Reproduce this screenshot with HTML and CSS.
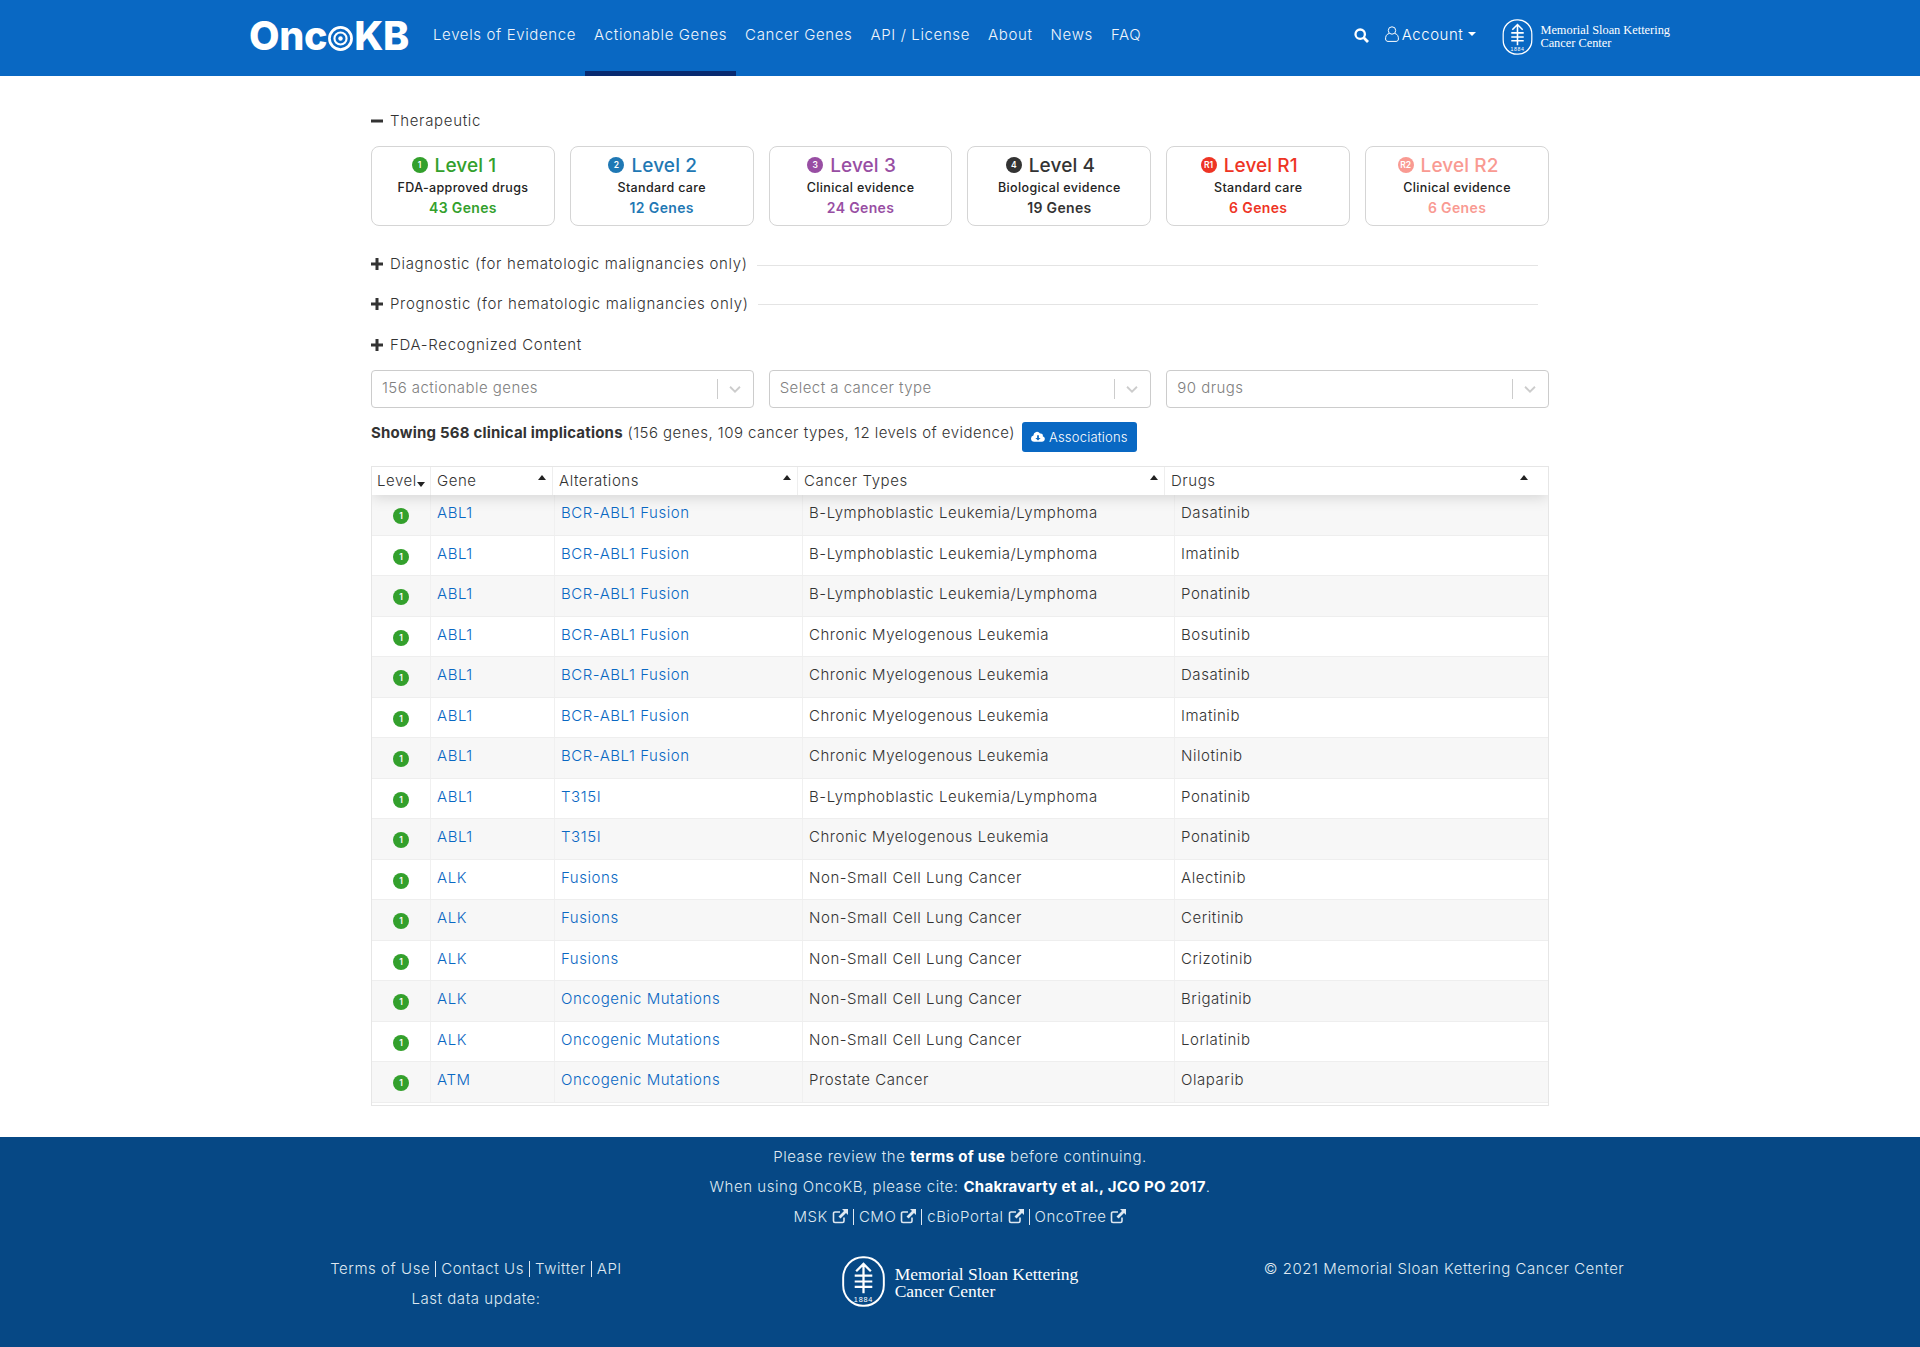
FILE: index.html
```html
<!DOCTYPE html>
<html lang="en">
<head>
    <meta charset="UTF-8">
    <title>OncoKB - Actionable Genes</title>
    <link rel="stylesheet" href="styles.css">
</head>
<body>
    <svg class="sprites" width="0" height="0">
        <symbol id="msk" viewBox="0 0 44 52">
            <rect x="1.2" y="1.2" width="41.6" height="49.6" rx="20" ry="21" fill="none" stroke="currentColor" stroke-width="2"/>
            <path d="M22 8V38M14.500 15.500L22 8L29.500 15.500M13 20H31M13 26H31M13 31.500H31" fill="none" stroke="currentColor" stroke-width="2.300"/>
        </symbol>
        <symbol id="ext" viewBox="0 0 16 16">
            <path d="M12 9.500V13a1.500 1.500 0 0 1-1.500 1.500H3A1.500 1.500 0 0 1 1.500 13V5.500A1.500 1.500 0 0 1 3 4h5" fill="none" stroke="currentColor" stroke-width="1.600"/>
            <path d="M10 1h6v6l-2-2-5.500 5.500-2-2L12 3z" fill="currentColor"/>
        </symbol>
        <symbol id="chev" viewBox="0 0 20 20">
            <path d="M4.500 7.500L10 13l5.500-5.500" fill="none" stroke="currentColor" stroke-width="2"/>
        </symbol>
        <symbol id="plus" viewBox="0 0 12 12">
            <path d="M4.500 0h3v4.500H12v3H7.500V12h-3V7.500H0v-3h4.500z" fill="currentColor"/>
        </symbol>
    </svg>

    <header class="navbar">
        <div class="nav-inner">
            <a class="logo">Onc<svg class="logo-target" viewBox="0 0 26 26"><circle cx="13" cy="13" r="11.500" fill="none" stroke="#fff" stroke-width="2.800"/><circle cx="13" cy="13" r="6.300" fill="none" stroke="#fff" stroke-width="2.200"/><circle cx="13" cy="13" r="2.300" fill="#fff"/></svg>KB</a>
            <nav class="nav-links">
                <a>Levels of Evidence</a>
                <a class="active">Actionable Genes</a>
                <a>Cancer Genes</a>
                <a>API / License</a>
                <a>About</a>
                <a>News</a>
                <a>FAQ</a>
            </nav>
            <div class="nav-right">
                <svg class="search-icon" viewBox="0 0 15 15"><circle cx="6.200" cy="6.200" r="4.700" fill="none" stroke="#fff" stroke-width="2.300"/><path d="M9.800 9.800L14 14" stroke="#fff" stroke-width="2.800"/></svg>
                <a class="account">
                    <svg class="user-icon" viewBox="0 0 14 16"><circle cx="7" cy="4.500" r="3.700" fill="none" stroke="#fff"/><path d="M4 7.500C1 8.500.6 10.500.6 13c0 1.500 1 2.400 2.400 2.400h8c1.400 0 2.400-.9 2.400-2.400 0-2.500-.4-4.500-3.400-5.500" fill="none" stroke="#fff"/></svg>
                    Account<span class="caret"></span>
                </a>
                <div class="msk-logo msk-small">
                    <svg viewBox="0 0 44 52"><use href="#msk"/><text class="msk-year" x="22" y="46.500">1884</text></svg>
                    <span>Memorial Sloan Kettering<br>Cancer Center</span>
                </div>
            </div>
        </div>
    </header>

    <main class="page">
        <div class="section-title first"><svg class="toggle" viewBox="0 0 12 12"><rect y="4.500" width="12" height="3" fill="currentColor"/></svg>Therapeutic</div>
        <div class="cards">
            <div class="card level-1"><div class="card-title"><span class="badge">1</span>Level 1</div><div class="card-sub">FDA-approved drugs</div><div class="card-count">43 Genes</div></div>
            <div class="card level-2"><div class="card-title"><span class="badge">2</span>Level 2</div><div class="card-sub">Standard care</div><div class="card-count">12 Genes</div></div>
            <div class="card level-3"><div class="card-title"><span class="badge">3</span>Level 3</div><div class="card-sub">Clinical evidence</div><div class="card-count">24 Genes</div></div>
            <div class="card level-4"><div class="card-title"><span class="badge">4</span>Level 4</div><div class="card-sub">Biological evidence</div><div class="card-count">19 Genes</div></div>
            <div class="card level-r1"><div class="card-title"><span class="badge">R1</span>Level R1</div><div class="card-sub">Standard care</div><div class="card-count">6 Genes</div></div>
            <div class="card level-r2"><div class="card-title"><span class="badge">R2</span>Level R2</div><div class="card-sub">Clinical evidence</div><div class="card-count">6 Genes</div></div>
        </div>

        <div class="section-title diag"><svg class="toggle"><use href="#plus"/></svg>Diagnostic (for hematologic malignancies only)<span class="rule"></span></div>
        <div class="section-title prog"><svg class="toggle"><use href="#plus"/></svg>Prognostic (for hematologic malignancies only)<span class="rule"></span></div>
        <div class="section-title fda"><svg class="toggle"><use href="#plus"/></svg>FDA-Recognized Content</div>

        <div class="filters">
            <div class="select"><span>156 actionable genes</span><i></i><svg><use href="#chev"/></svg></div>
            <div class="select"><span>Select a cancer type</span><i></i><svg><use href="#chev"/></svg></div>
            <div class="select"><span>90 drugs</span><i></i><svg><use href="#chev"/></svg></div>
        </div>

        <div class="summary">
            <p><b>Showing 568 clinical implications</b> (156 genes, 109 cancer types, 12 levels of evidence)</p>
            <button class="btn-assoc"><svg viewBox="0 0 16 13"><path d="M13.400 5.700A2.400 2.400 0 0 0 10.300 2.600 4 4 0 0 0 2.800 4.600v.3A3.600 3.600 0 0 0 3.600 12h9.200a3.200 3.200 0 0 0 .6-6.300z" fill="#fff"/><path d="M7 4.500h2v3h2L8 10.500 5 7.500h2z" fill="#0968c3"/></svg>Associations</button>
        </div>

        <div class="table">
            <div class="thead">
                <div class="th th-level">Level<span class="sort-down"></span></div>
                <div class="th">Gene<span class="sort-up"></span></div>
                <div class="th">Alterations<span class="sort-up"></span></div>
                <div class="th">Cancer Types<span class="sort-up"></span></div>
                <div class="th">Drugs<span class="sort-up"></span></div>
            </div>
            <div class="tr"><div class="td td-level"><span class="badge">1</span></div><div class="td"><a>ABL1</a></div><div class="td"><a>BCR-ABL1 Fusion</a></div><div class="td">B-Lymphoblastic Leukemia/Lymphoma</div><div class="td">Dasatinib</div></div>
            <div class="tr"><div class="td td-level"><span class="badge">1</span></div><div class="td"><a>ABL1</a></div><div class="td"><a>BCR-ABL1 Fusion</a></div><div class="td">B-Lymphoblastic Leukemia/Lymphoma</div><div class="td">Imatinib</div></div>
            <div class="tr"><div class="td td-level"><span class="badge">1</span></div><div class="td"><a>ABL1</a></div><div class="td"><a>BCR-ABL1 Fusion</a></div><div class="td">B-Lymphoblastic Leukemia/Lymphoma</div><div class="td">Ponatinib</div></div>
            <div class="tr"><div class="td td-level"><span class="badge">1</span></div><div class="td"><a>ABL1</a></div><div class="td"><a>BCR-ABL1 Fusion</a></div><div class="td">Chronic Myelogenous Leukemia</div><div class="td">Bosutinib</div></div>
            <div class="tr"><div class="td td-level"><span class="badge">1</span></div><div class="td"><a>ABL1</a></div><div class="td"><a>BCR-ABL1 Fusion</a></div><div class="td">Chronic Myelogenous Leukemia</div><div class="td">Dasatinib</div></div>
            <div class="tr"><div class="td td-level"><span class="badge">1</span></div><div class="td"><a>ABL1</a></div><div class="td"><a>BCR-ABL1 Fusion</a></div><div class="td">Chronic Myelogenous Leukemia</div><div class="td">Imatinib</div></div>
            <div class="tr"><div class="td td-level"><span class="badge">1</span></div><div class="td"><a>ABL1</a></div><div class="td"><a>BCR-ABL1 Fusion</a></div><div class="td">Chronic Myelogenous Leukemia</div><div class="td">Nilotinib</div></div>
            <div class="tr"><div class="td td-level"><span class="badge">1</span></div><div class="td"><a>ABL1</a></div><div class="td"><a>T315I</a></div><div class="td">B-Lymphoblastic Leukemia/Lymphoma</div><div class="td">Ponatinib</div></div>
            <div class="tr"><div class="td td-level"><span class="badge">1</span></div><div class="td"><a>ABL1</a></div><div class="td"><a>T315I</a></div><div class="td">Chronic Myelogenous Leukemia</div><div class="td">Ponatinib</div></div>
            <div class="tr"><div class="td td-level"><span class="badge">1</span></div><div class="td"><a>ALK</a></div><div class="td"><a>Fusions</a></div><div class="td">Non-Small Cell Lung Cancer</div><div class="td">Alectinib</div></div>
            <div class="tr"><div class="td td-level"><span class="badge">1</span></div><div class="td"><a>ALK</a></div><div class="td"><a>Fusions</a></div><div class="td">Non-Small Cell Lung Cancer</div><div class="td">Ceritinib</div></div>
            <div class="tr"><div class="td td-level"><span class="badge">1</span></div><div class="td"><a>ALK</a></div><div class="td"><a>Fusions</a></div><div class="td">Non-Small Cell Lung Cancer</div><div class="td">Crizotinib</div></div>
            <div class="tr"><div class="td td-level"><span class="badge">1</span></div><div class="td"><a>ALK</a></div><div class="td"><a>Oncogenic Mutations</a></div><div class="td">Non-Small Cell Lung Cancer</div><div class="td">Brigatinib</div></div>
            <div class="tr"><div class="td td-level"><span class="badge">1</span></div><div class="td"><a>ALK</a></div><div class="td"><a>Oncogenic Mutations</a></div><div class="td">Non-Small Cell Lung Cancer</div><div class="td">Lorlatinib</div></div>
            <div class="tr"><div class="td td-level"><span class="badge">1</span></div><div class="td"><a>ATM</a></div><div class="td"><a>Oncogenic Mutations</a></div><div class="td">Prostate Cancer</div><div class="td">Olaparib</div></div>
        </div>
    </main>

    <footer class="footer">
        <p>Please review the <b>terms of use</b> before continuing.</p>
        <p>When using OncoKB, please cite: <b>Chakravarty et al., JCO PO 2017</b>.</p>
        <p class="ext-links">MSK <svg><use href="#ext"/></svg><i></i>CMO <svg><use href="#ext"/></svg><i></i>cBioPortal <svg><use href="#ext"/></svg><i></i>OncoTree <svg><use href="#ext"/></svg></p>
        <div class="footer-cols">
            <div>
                <p class="ext-links tight">Terms of Use<i></i>Contact Us<i></i>Twitter<i></i>API</p>
                <p>Last data update:</p>
            </div>
            <div class="msk-logo msk-large">
                <svg viewBox="0 0 44 52"><use href="#msk"/><text class="msk-year" x="22" y="46.500">1884</text></svg>
                <span>Memorial Sloan Kettering<br>Cancer Center</span>
            </div>
            <div><p>© 2021 Memorial Sloan Kettering Cancer Center</p></div>
        </div>
    </footer>
</body>
</html>
```

FILE: styles.css
```css
* {
    box-sizing: border-box;
}
body {
    margin: 0;
    font-family: Inter, "Open Sans", sans-serif;
    font-size: 15px;
    font-weight: 350;
    letter-spacing: 0.55px;
    color: #333;
    background: #fff;
}
p {
    margin: 0;
}
.sprites {
    display: block;
    height: 0;
}

/* nav */
.navbar {
    height: 76px;
    background: #0968c3;
    color: #fff;
}
.nav-inner {
    width: 1420px;
    height: 76px;
    margin: 0 auto;
    display: flex;
    align-items: center;
}
.logo {
    width: 175px;
    display: flex;
    align-items: center;
    margin-top: -5px;
    margin-left: -1px;
    font-size: 39.500px;
    font-weight: 800;
    letter-spacing: -0.3px;
    color: #fff;
}
.logo-target {
    width: 25px;
    height: 25px;
    margin: 5px 1px 0 1px;
}
.nav-links {
    display: flex;
    height: 76px;
    letter-spacing: 0.63px;
}
.nav-links a {
    padding: 25px 9px 0;
    line-height: 20px;
    color: #f0f5fb;
    border-bottom: 5px solid transparent;
}
.nav-links a.active {
    border-bottom-color: #082a70;
}
.nav-right {
    margin-left: auto;
    display: flex;
    align-items: center;
}
.search-icon {
    width: 15px;
    height: 15px;
    margin: -6px 16px 0 0;
}
.account {
    display: flex;
    align-items: center;
    margin: -8px 26px 0 0;
}
.user-icon {
    width: 14px;
    height: 16px;
    margin-right: 3px;
}
.caret {
    margin-left: 5px;
    border-top: 4px solid #fff;
    border-left: 4.500px solid transparent;
    border-right: 4.500px solid transparent;
}
.msk-logo {
    display: flex;
    align-items: center;
    font-family: "Liberation Serif", serif;
    font-weight: 400;
    letter-spacing: 0;
    color: #fff;
}
.msk-year {
    font-family: "Liberation Sans", sans-serif;
    font-size: 7.500px;
    letter-spacing: 0.8px;
    text-anchor: middle;
    fill: currentColor;
}
.msk-small {
    gap: 7px;
    font-size: 12.350px;
    line-height: 13px;
    margin-top: -2px;
}
.msk-small svg {
    width: 31px;
    height: 36px;
}
.msk-large {
    gap: 10px;
    font-size: 17.500px;
    line-height: 17.500px;
}
.msk-large svg {
    width: 43px;
    height: 51px;
}
.msk-large span {
    margin-top: 3px;
}

/* page */
.page {
    width: 1178px;
    margin: 0 auto;
    height: 1061px;
    padding-top: 34px;
}
.section-title {
    display: flex;
    align-items: center;
    height: 22px;
    line-height: 22px;
    letter-spacing: 0.68px;
}
.toggle {
    width: 12px;
    height: 12px;
    margin-right: 7px;
    flex: none;
    color: #333;
}
.rule {
    flex: 1;
    height: 1px;
    margin: 2px 11px 0 9px;
    background: #e4e4e4;
}
.diag {
    margin-top: 27px;
}
.prog {
    margin-top: 17.500px;
}
.fda {
    margin-top: 19.500px;
}
.cards {
    display: flex;
    gap: 15px;
    margin-top: 14px;
}
.card {
    flex: 1;
    height: 80px;
    padding-top: 6px;
    border: 1px solid #d5d5d5;
    border-radius: 8px;
    text-align: center;
}
.card-title {
    display: flex;
    align-items: center;
    justify-content: center;
    height: 24px;
    padding-right: 18px;
    font-size: 19px;
    font-weight: 500;
    letter-spacing: 0.1px;
    color: var(--level);
}
.card-title .badge {
    margin-right: 7px;
}
.card-sub {
    height: 20px;
    margin-top: 1px;
    line-height: 20px;
    font-size: 12.500px;
    font-weight: 500;
    letter-spacing: 0.35px;
    color: #222;
}
.card-count {
    line-height: 20px;
    font-size: 14px;
    font-weight: 600;
    letter-spacing: 0.35px;
    color: var(--level);
}
.level-1 { --level: #33a02c; }
.level-2 { --level: #1f78b4; }
.level-3 { --level: #984ea3; }
.level-4 { --level: #333; }
.level-r1 { --level: #ee3424; }
.level-r2 { --level: #f99a92; }
.badge {
    flex: none;
    width: 16px;
    height: 16px;
    display: inline-flex;
    align-items: center;
    justify-content: center;
    border-radius: 50%;
    background: var(--level, #33a02c);
    color: #fff;
    font-size: 8.500px;
    font-weight: 600;
    letter-spacing: 0;
}

/* filters */
.filters {
    display: flex;
    gap: 15px;
    margin-top: 14px;
}
.select {
    flex: 1;
    height: 38px;
    display: flex;
    align-items: center;
    padding: 0 9px 0 10px;
    border: 1px solid #ccc;
    border-radius: 4px;
    color: #808080;
    letter-spacing: 0.45px;
}
.select span {
    flex: 1;
    margin-top: -3px;
}
.select i {
    width: 1px;
    height: 20px;
    background: #ccc;
    margin-right: 8px;
}
.select svg {
    width: 18px;
    height: 18px;
    color: #ccc;
}

.summary {
    display: flex;
    align-items: flex-start;
    margin-top: 14px;
    height: 44px;
    letter-spacing: 0.47px;
}
.summary p {
    line-height: 22px;
}
.summary b {
    font-weight: 700;
    letter-spacing: 0.2px;
}
.btn-assoc {
    display: flex;
    align-items: center;
    gap: 4px;
    height: 30px;
    margin-left: 7px;
    padding: 0 9px;
    border: none;
    border-radius: 3px;
    background: #0968c3;
    color: #fff;
    font: inherit;
    font-size: 13px;
    letter-spacing: 0.2px;
}
.btn-assoc svg {
    width: 14px;
    height: 12px;
}

/* table */
.table {
    height: 640px;
    border: 1px solid #e6e6e6;
    overflow: hidden;
}
.thead {
    position: relative;
    display: grid;
    grid-template-columns: 59px 122px 245px 367px 1fr;
    height: 28px;
    background: #fff;
    box-shadow: 0 2px 15px rgba(0, 0, 0, 0.15);
}
.th {
    display: flex;
    justify-content: space-between;
    padding: 2px 12px 0 5px;
    line-height: 24px;
    border-right: 1px solid #eee;
}
.th + .th {
    padding-left: 6px;
}
.th:last-child {
    border-right: none;
    padding-right: 26px;
}
.th-level {
    justify-content: flex-start;
    padding-right: 0;
}
.sort-up,
.sort-down {
    width: 0;
    height: 0;
    margin-top: 6px;
    border-left: 4.500px solid transparent;
    border-right: 4.500px solid transparent;
}
.sort-up {
    border-bottom: 5px solid #222;
    margin-right: -6px;
}
.sort-down {
    margin: 13px 0 0 0;
    border-top: 5px solid #222;
}
.tr {
    display: grid;
    grid-template-columns: 59px 124px 248px 372px 1fr;
    height: 40.500px;
    border-bottom: 1px solid #eee;
}
.tr:nth-child(even) {
    background: #f7f7f7;
}
.td {
    padding: 7px 5px 0 6px;
    line-height: 22px;
    border-right: 1px solid #f0f0f0;
}
.td:last-child {
    border-right: none;
}
.td a {
    color: #0968c3;
}
.td-level {
    display: flex;
    justify-content: center;
    padding: 13px 0 0;
}

/* footer */
.footer {
    height: 210px;
    padding-top: 9px;
    background: #064885;
    color: #dfe8f1;
    text-align: center;
    letter-spacing: 0.55px;
}
.footer > p {
    height: 30px;
    line-height: 22px;
}
.footer b {
    color: #fff;
    font-weight: 700;
    letter-spacing: 0.3px;
}
.ext-links {
    display: flex;
    justify-content: center;
    align-items: flex-start;
}
.ext-links svg {
    width: 16px;
    height: 16px;
    margin: 2px 0 0 4px;
}
.ext-links i {
    width: 1px;
    height: 16px;
    margin: 3px 5px 0;
    background: #dfe8f1;
}
.footer-cols {
    width: 1452px;
    margin: 22px auto 0;
    display: grid;
    grid-template-columns: 1fr 1fr 1fr;
}
.footer-cols p {
    height: 30px;
    line-height: 22px;
}
.msk-large {
    justify-content: center;
    align-self: start;
    margin-top: -2px;
    color: #fff;
    text-align: left;
}
```
